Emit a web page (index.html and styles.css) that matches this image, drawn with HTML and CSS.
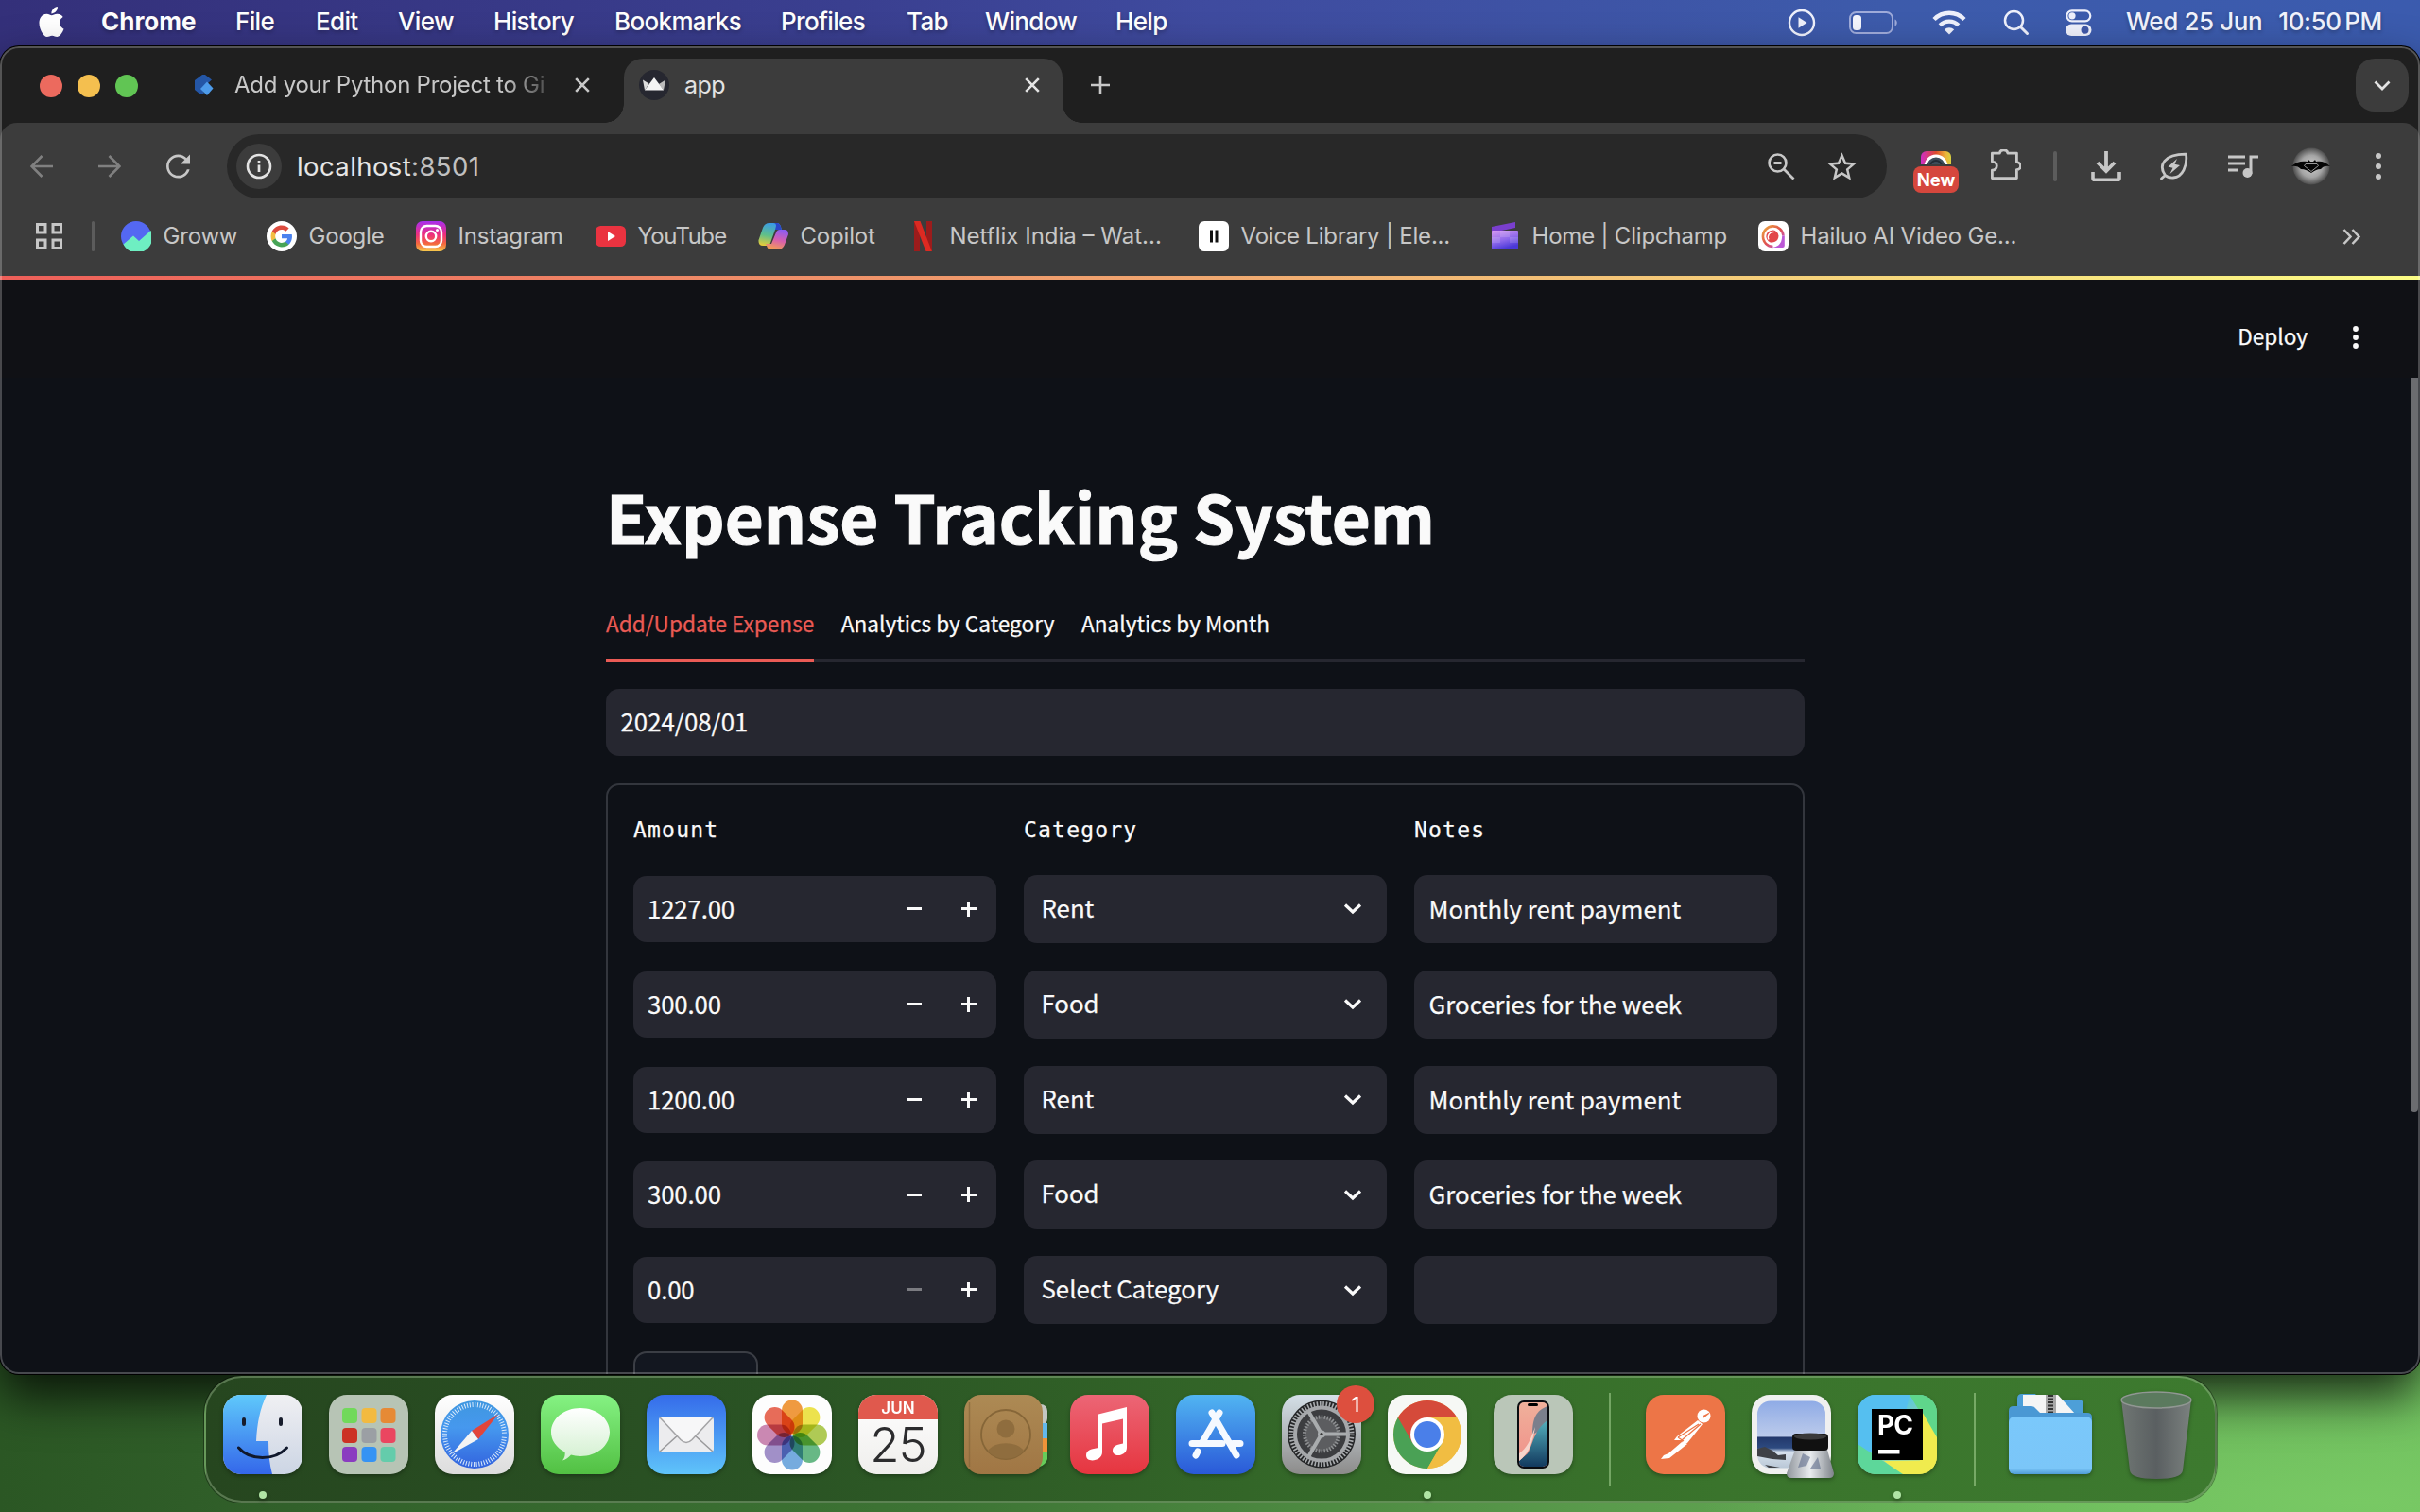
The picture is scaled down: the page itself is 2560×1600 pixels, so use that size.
FILE: index.html
```html
<!DOCTYPE html>
<html lang="en">
<head>
<meta charset="utf-8">
<title>app</title>
<link rel="stylesheet" href="styles.css">
</head>
<body>
<header class="menubar">
  <svg class="apple" viewBox="2 0 20 24"><path fill="#fff" d="M12.152 6.896c-.948 0-2.415-1.078-3.96-1.04-2.04.027-3.91 1.183-4.961 3.014-2.117 3.675-.546 9.103 1.519 12.09 1.013 1.454 2.208 3.09 3.792 3.039 1.52-.065 2.09-.987 3.935-.987 1.831 0 2.35.987 3.96.948 1.637-.026 2.676-1.48 3.676-2.948 1.156-1.688 1.636-3.325 1.662-3.415-.039-.013-3.182-1.221-3.22-4.857-.026-3.04 2.48-4.494 2.597-4.559-1.429-2.09-3.623-2.324-4.39-2.376-2-.156-3.675 1.09-4.61 1.09zM15.53 3.83c.843-1.012 1.4-2.427 1.245-3.83-1.207.052-2.662.805-3.532 1.818-.78.896-1.454 2.338-1.273 3.714 1.338.104 2.715-.688 3.559-1.701"/></svg>
  <nav class="menus">
    <span class="t menu-app">Chrome</span><span class="t">File</span><span class="t">Edit</span><span class="t">View</span><span class="t">History</span><span class="t">Bookmarks</span><span class="t">Profiles</span><span class="t">Tab</span><span class="t">Window</span><span class="t">Help</span>
  </nav>
  <div class="status">
    <svg width="30" height="30" viewBox="0 0 30 30"><circle cx="15" cy="15" r="13" fill="none" stroke="#eef0fb" stroke-width="2.4"/><path d="M11.5 9.2v11.6l9-5.8z" fill="#eef0fb"/></svg>
    <svg width="52" height="24" viewBox="0 0 52 24"><rect x="1" y="1" width="45" height="22" rx="6.5" fill="none" stroke="#9fabda" stroke-width="2"/><rect x="4" y="4" width="9" height="16" rx="3.5" fill="#f3f4fc"/><path d="M48.500 8.500c3 1 3 6 0 7z" fill="#9fabda"/></svg>
    <svg width="36" height="26" viewBox="0 0 36 26"><g fill="none" stroke="#eef0fb" stroke-width="4.400"><path d="M2 9.500a22.500 22.500 0 0 1 32 0"/><path d="M8.200 15.700a13.800 13.800 0 0 1 19.600 0"/></g><path d="M12.800 20.300a7.400 7.400 0 0 1 10.400 0L18 25.500z" fill="#eef0fb"/></svg>
    <svg width="28" height="28" viewBox="0 0 28 28"><circle cx="11.500" cy="11.500" r="9.500" fill="none" stroke="#eef0fb" stroke-width="2.500"/><path d="M18.500 18.500l7 7" stroke="#eef0fb" stroke-width="3" stroke-linecap="round"/></svg>
    <svg width="28" height="28" viewBox="0 0 28 28"><rect x="1.300" y="1.300" width="25" height="11" rx="5.500" fill="none" stroke="#eef0fb" stroke-width="2.200"/><circle cx="7" cy="6.800" r="3.600" fill="#eef0fb"/><rect y="15.500" width="27.500" height="12.500" rx="6.200" fill="#eef0fb"/><circle cx="20.500" cy="21.800" r="4" fill="#4058a8"/></svg>
  </div>
  <div class="clock"><span class="t">Wed 25 Jun</span><span class="t time">10:50 PM</span></div>
</header>

<main class="window">
  <div class="tabstrip">
    <div class="lights"><i class="red"></i><i class="yellow"></i><i class="green"></i></div>
    <div class="tab">
      <svg class="fav" width="20" height="22" viewBox="0 0 20 22"><path d="M8 0h3l7 5.500-7 6-3 4 2 4-4 1.500-6-5V6z" fill="#2456a6"/><path d="M13 7.500l6.500 7L13 22l-7-7z" fill="#4d9bea"/></svg>
      <span class="t tab-title fade">Add your Python Project to Gi</span>
      <svg width="16" height="16" viewBox="0 0 16 16"><path d="M1.200 1.200l13.600 13.600M14.800 1.200L1.200 14.800" stroke="#c7c7c7" stroke-width="2.600"/></svg>
    </div>
    <div class="tab active">
      <svg class="fav" width="32" height="32" viewBox="0 0 32 32"><circle cx="16" cy="16" r="16" fill="#262730"/><path d="M6 21.500L4 10.500l6.500 4z" fill="#ddd"/><path d="M28 10.500l-2 11-5-6.500z" fill="#bbb"/><path d="M16 8l6 8 4 5.500H6l4-5.500z" fill="#f4f4f4"/></svg>
      <span class="t tab-title">app</span>
      <svg width="16" height="16" viewBox="0 0 16 16"><path d="M1.200 1.200l13.600 13.600M14.800 1.200L1.200 14.800" stroke="#e3e3e3" stroke-width="2.600"/></svg>
    </div>
    <svg class="newtab" width="20" height="20" viewBox="0 0 20 20"><path d="M10 0v20M0 10h20" stroke="#c7c7c7" stroke-width="2.600"/></svg>
    <div class="tabsearch"><svg width="18" height="11" viewBox="0 0 18 11"><path d="M1.500 1.500L9 9l7.500-7.500" fill="none" stroke="#e3e3e3" stroke-width="2.700"/></svg></div>
  </div>

  <div class="toolbar">
    <div class="navs">
      <svg width="24" height="24" viewBox="0 0 24 24"><path d="M24 12H2M12.500 1L1.600 12l10.900 11" fill="none" stroke="#808080" stroke-width="2.600"/></svg>
      <svg width="24" height="24" viewBox="0 0 24 24"><path d="M0 12h22M11.500 1l10.900 11-10.900 11" fill="none" stroke="#808080" stroke-width="2.600"/></svg>
      <svg width="25" height="26" viewBox="4 3.800 16 16.400"><path fill="#c7c7c7" d="M17.65 6.35C16.2 4.9 14.210 4 12 4c-4.420 0-7.990 3.580-7.990 8s3.570 8 7.990 8c3.730 0 6.840-2.550 7.730-6h-1.800c-.9 2.550-3.200 4.300-5.930 4.300-3.480 0-6.300-2.820-6.300-6.300s2.820-6.300 6.300-6.300c1.740 0 3.300.71 4.430 1.850L13.600 10.400H20V4z"/></svg>
    </div>
    <div class="omnibox">
      <div class="siteinfo"><svg width="28" height="28" viewBox="0 0 28 28"><circle cx="14" cy="14" r="12" fill="none" stroke="#e3e3e3" stroke-width="2.600"/><path d="M14 12.500v7.500M14 8v2.700" stroke="#e3e3e3" stroke-width="2.700"/></svg></div>
      <span class="t url">localhost<em>:8501</em></span>
      <svg class="zoomout" width="29" height="29" viewBox="0 0 29 29"><circle cx="10.500" cy="10.500" r="9" fill="none" stroke="#c7c7c7" stroke-width="2.600"/><path d="M17 17l10.500 10.500M6.500 10.500h8" stroke="#c7c7c7" stroke-width="2.800"/></svg>
      <svg class="star" width="31" height="30" viewBox="2 2 20 19"><path fill="#c7c7c7" d="M22 9.240l-7.190-.620L12 2 9.190 8.630 2 9.240l5.460 4.730L5.820 21 12 17.270 18.180 21l-1.630-7.030L22 9.240zM12 15.400l-3.760 2.270 1-4.280-3.320-2.880 4.380-.380L12 6.100l1.710 4.040 4.380.380-3.320 2.880 1 4.280L12 15.400z"/></svg>
    </div>
    <div class="actions">
      <div class="ext"><svg width="32" height="16" viewBox="0 0 32 16"><defs><linearGradient id="ex"><stop offset="0" stop-color="#cf2fc4"/><stop offset=".5" stop-color="#dd4a2c"/><stop offset=".8" stop-color="#edb03a"/><stop offset="1" stop-color="#d8d040"/></linearGradient><clipPath id="exc"><path d="M0 14V6a6 6 0 0 1 6-6h20a6 6 0 0 1 6 6v8z"/></clipPath></defs><g clip-path="url(#exc)"><path d="M0 0h32v14H0z" fill="url(#ex)"/><circle cx="16" cy="16" r="11" fill="#3d4d5a" stroke="#fff" stroke-width="3"/><circle cx="16" cy="16" r="6" fill="none" stroke="#222c36" stroke-width="2"/></g></svg><b class="t badge-new">New</b></div>
      <svg class="puzzle" width="32" height="32" viewBox="0 0 32 32"><path d="M10 4.500c.5-4.500 8-4.500 8.500 0H28v9.500c5.500 0 5.500 8 0 8v9H2v-8.500c6.500 0 6.500-9 0-9V4.500z" transform="translate(-.6 -.4)" fill="none" stroke="#c7c7c7" stroke-width="2.800" stroke-linejoin="round"/></svg>
      <i class="sep"></i>
      <svg class="dl" width="32" height="32" viewBox="0 0 32 32"><path d="M16 0v21M7 12l9 9 9-9" fill="none" stroke="#c7c7c7" stroke-width="3.800"/><path d="M2 22v7q0 1.300 1.300 1.300h25.400q1.300 0 1.300-1.300v-7" fill="none" stroke="#c7c7c7" stroke-width="3.600"/></svg>
      <svg class="leaf" width="30" height="30" viewBox="0 0 30 30"><path d="M5.500 24.500C-2 14 4 2 27.500 2.200 29 14 24 26.500 14 27c-4 .2-6.500-.5-8.500-2.500zM1.500 28l4-3.500z" fill="none" stroke="#c7c7c7" stroke-width="2.800" stroke-linejoin="round"/><path d="M18 7L8.500 15.500l5 1.200L10.500 23l10.500-9-5.500-1.200z" fill="#c7c7c7"/></svg>
      <svg class="music" width="32" height="26" viewBox="0 0 32 26"><path d="M0 3h18M0 10h18M0 17h11M24 21V3h8" fill="none" stroke="#c7c7c7" stroke-width="3"/><circle cx="20.500" cy="20" r="5" fill="#c7c7c7"/></svg>
      <svg class="avatar" width="44" height="40" viewBox="0 0 44 40"><defs><radialGradient id="av"><stop offset="0" stop-color="#d0d0d0"/><stop offset=".6" stop-color="#a4a4a4"/><stop offset="1" stop-color="#4d4d4d"/></radialGradient></defs><circle cx="22" cy="20" r="19.500" fill="url(#av)"/><path d="M1 20c5-5 11-6 17-5l1-2 2 2h3l2-2 1 2c5-1 10 0 15 5-4-1-8 0-10 3-4 0-7 2-10 4-3-2-7-4-11-4-2-3-7-4-10-3z" fill="#050505"/><path d="M16 17.500h12l1.500 2-7.500 6-7.500-6z" fill="none" stroke="#999" stroke-width="1"/></svg>
      <svg class="more" width="6" height="30" viewBox="0 0 6 30"><g fill="#c7c7c7"><circle cx="3" cy="4" r="3"/><circle cx="3" cy="15" r="3"/><circle cx="3" cy="26" r="3"/></g></svg>
    </div>
  </div>

  <div class="bookmarks">
    <svg class="apps" width="28" height="28" viewBox="0 0 28 28"><path d="M1.500 1.500h8.500v8.500H1.500zM18 1.500h8.500v8.500H18zM1.500 18h8.500v8.500H1.500zM18 18h8.500v8.500H18z" fill="none" stroke="#c7c7c7" stroke-width="3"/></svg>
    <i class="sep"></i>
    <div class="marks">
      <a><svg viewBox="0 0 32 32"><circle cx="16" cy="16" r="16" fill="#5468f2"/><path d="M2.500 24.500L13 15.500l6 5.500L31.500 10A16 16 0 0 1 2.500 24.500z" fill="#6eefc2"/></svg><span class="t">Groww</span></a>
      <a><svg viewBox="0 0 32 32"><circle cx="16" cy="16" r="16" fill="#fff"/><g transform="translate(3.500 3.500) scale(1.040)"><path fill="#4b82ee" d="M22.56 12.250c0-.780-.070-1.530-.200-2.250H12v4.260h5.920c-.260 1.370-1.040 2.530-2.210 3.310v2.770h3.570c2.080-1.920 3.280-4.740 3.280-8.090z"/><path fill="#48a457" d="M12 23c2.970 0 5.460-.980 7.280-2.660l-3.570-2.770c-.980.660-2.230 1.060-3.710 1.060-2.860 0-5.290-1.930-6.160-4.530H2.180v2.840C3.990 20.530 7.700 23 12 23z"/><path fill="#f3bd42" d="M5.840 14.090c-.220-.660-.350-1.360-.350-2.090s.130-1.430.350-2.090V7.070H2.180C1.430 8.550 1 10.220 1 12s.430 3.450 1.180 4.930l2.850-2.220.810-.620z"/><path fill="#dc4b3e" d="M12 5.380c1.620 0 3.060.560 4.210 1.640l3.150-3.150C17.450 2.090 14.970 1 12 1 7.700 1 3.990 3.470 2.180 7.070l3.660 2.840c.870-2.600 3.300-4.530 6.160-4.530z"/></g></svg><span class="t">Google</span></a>
      <a><svg viewBox="0 0 32 32"><defs><linearGradient id="ig" x1="0" y1="0" x2="0" y2="1"><stop offset="0" stop-color="#a72ff0"/><stop offset=".45" stop-color="#ee2f7c"/><stop offset=".75" stop-color="#f3693e"/><stop offset="1" stop-color="#f7c84c"/></linearGradient></defs><rect width="32" height="32" rx="7" fill="url(#ig)"/><rect x="5" y="5" width="22" height="22" rx="6.500" fill="none" stroke="#fff" stroke-width="2.400"/><circle cx="16" cy="16" r="5.200" fill="none" stroke="#fff" stroke-width="2.400"/><circle cx="22.500" cy="9.500" r="1.500" fill="#fff"/></svg><span class="t">Instagram</span></a>
      <a><svg viewBox="0 0 32 32"><rect y="5" width="32" height="22" rx="5.500" fill="#ea3340"/><path d="M13 11v10l8-5z" fill="#fff"/></svg><span class="t tight">YouTube</span></a>
      <a><svg viewBox="0 0 32 32"><defs><linearGradient id="cp1" x1=".5" y1="0" x2=".3" y2="1"><stop offset="0" stop-color="#3a9be6"/><stop offset=".55" stop-color="#5fc08a"/><stop offset="1" stop-color="#e6cc3a"/></linearGradient><linearGradient id="cp2" x1=".6" y1="0" x2=".3" y2="1"><stop offset="0" stop-color="#8d5cf0"/><stop offset=".5" stop-color="#d75fae"/><stop offset="1" stop-color="#f4a04e"/></linearGradient></defs><path d="M12 2h8q3 0 4 4l1 3h-7l-5 14q-1 3-4 3H5q-5 0-4.500-6L5 7q2-5 7-5z" fill="url(#cp1)"/><path d="M20 2q3 0 4 4l1 3h-7l1-4q0-3-3-3z" fill="#2b46c8"/><path d="M21 30h-8q-3 0-4-4l-1-2h6l5-12q1-3 4-3h5q4 0 4 5l-4 11q-2 5-7 5z" fill="url(#cp2)"/></svg><span class="t">Copilot</span></a>
      <a><svg viewBox="0 0 32 32"><path d="M7 0h6v32l-6 .5zM20 0h6v32.500L20 32z" fill="#9c1c1c"/><path d="M7 0h6.500L26 32.500 19.500 32z" fill="#dc2a22"/></svg><span class="t wide">Netflix India – Wat...</span></a>
      <a><svg viewBox="0 0 32 32"><rect width="32" height="32" rx="6" fill="#fff"/><path d="M12 9.500h3v13h-3zM17.500 9.500h3v13h-3z" fill="#111"/></svg><span class="t">Voice Library | Ele...</span></a>
      <a><svg viewBox="0 0 32 32"><defs><linearGradient id="cc" x1="0" y1="0" x2=".4" y2="1"><stop offset="0" stop-color="#d79af0"/><stop offset=".6" stop-color="#8c67ea"/><stop offset="1" stop-color="#4a38d8"/></linearGradient></defs><path d="M2 6L27 1v6L8 11H2z" fill="#7a3fce"/><rect x="2" y="10" width="28" height="20" rx="1" fill="url(#cc)"/><path d="M11 10h10v7H11zM21 17h9v6h-9zM2 17h9v6H2z" fill="#fff" opacity=".13"/></svg><span class="t">Home | Clipchamp</span></a>
      <a><svg viewBox="0 0 32 32"><defs><linearGradient id="hl" x1="0" y1="0" x2="1" y2="1"><stop offset="0" stop-color="#ecaa3c"/><stop offset=".5" stop-color="#e0504e"/><stop offset="1" stop-color="#b95cf0"/></linearGradient></defs><rect width="32" height="32" rx="7" fill="#fff"/><path d="M26.500 15.500A10.800 10.800 0 1 0 15.500 27" fill="none" stroke="url(#hl)" stroke-width="2.600"/><path d="M27.800 15.500V26q0 2-2 2H15c7-1 10-5 10.200-12.500z" fill="#bb58d6"/><path d="M15.500 22.800a6.600 6.600 0 1 1 6-7.300c0 4-3 7.500-8 7z" fill="#e2474a"/><path d="M11 19.500c-2-4 1-8.500 5.500-8" fill="none" stroke="#fff" stroke-width="1.400"/></svg><span class="t">Hailuo AI Video Ge...</span></a>
    </div>
    <svg class="overflow" width="20" height="17" viewBox="0 0 20 17"><path d="M1.500 1l7 7.500-7 7.500M10.500 1l7 7.500-7 7.500" fill="none" stroke="#c7c7c7" stroke-width="2.500"/></svg>
  </div>

  <section class="page">
    <div class="decoration"></div>
    <div class="st-header"><span class="t deploy">Deploy</span><svg width="6" height="26" viewBox="0 0 6 26"><g fill="#fafafa"><circle cx="3" cy="4" r="2.900"/><circle cx="3" cy="13" r="2.900"/><circle cx="3" cy="22" r="2.900"/></g></svg></div>
    <div class="scrollbar"></div>
    <div class="block">
      <h1><span class="t">Expense Tracking System</span></h1>
      <div class="st-tabs"><span class="st-tab on"><span class="t">Add/Update Expense</span></span><span class="st-tab"><span class="t">Analytics by Category</span></span><span class="st-tab"><span class="t">Analytics by Month</span></span></div>
      <div class="field date"><span class="t">2024/08/01</span></div>
      <form class="form">
        <div class="label"><span class="t">Amount</span></div><div class="label"><span class="t">Category</span></div><div class="label"><span class="t">Notes</span></div>

        <div class="field amount"><span class="t">1227.00</span><i class="minus"></i><i class="plus"></i></div>
        <div class="field select"><span class="t">Rent</span><svg width="20" height="13" viewBox="0 0 20 13"><path d="M2 2.500l8 7.500 8-7.500" fill="none" stroke="#fafafa" stroke-width="3.200"/></svg></div>
        <div class="field"><span class="t">Monthly rent payment</span></div>

        <div class="field amount"><span class="t">300.00</span><i class="minus"></i><i class="plus"></i></div>
        <div class="field select"><span class="t">Food</span><svg width="20" height="13" viewBox="0 0 20 13"><path d="M2 2.500l8 7.500 8-7.500" fill="none" stroke="#fafafa" stroke-width="3.200"/></svg></div>
        <div class="field"><span class="t">Groceries for the week</span></div>

        <div class="field amount"><span class="t">1200.00</span><i class="minus"></i><i class="plus"></i></div>
        <div class="field select"><span class="t">Rent</span><svg width="20" height="13" viewBox="0 0 20 13"><path d="M2 2.500l8 7.500 8-7.500" fill="none" stroke="#fafafa" stroke-width="3.200"/></svg></div>
        <div class="field"><span class="t">Monthly rent payment</span></div>

        <div class="field amount"><span class="t">300.00</span><i class="minus"></i><i class="plus"></i></div>
        <div class="field select"><span class="t">Food</span><svg width="20" height="13" viewBox="0 0 20 13"><path d="M2 2.500l8 7.500 8-7.500" fill="none" stroke="#fafafa" stroke-width="3.200"/></svg></div>
        <div class="field"><span class="t">Groceries for the week</span></div>

        <div class="field amount"><span class="t">0.00</span><i class="minus off"></i><i class="plus"></i></div>
        <div class="field select"><span class="t">Select Category</span><svg width="20" height="13" viewBox="0 0 20 13"><path d="M2 2.500l8 7.500 8-7.500" fill="none" stroke="#fafafa" stroke-width="3.200"/></svg></div>
        <div class="field"></div>

        <div class="submit"></div>
      </form>
    </div>
  </section>
</main>

<footer class="dock">
  <div class="app running">
    <svg viewBox="0 0 84 84"><defs><linearGradient id="fa" x1="0" y1="0" x2="0" y2="1"><stop offset="0" stop-color="#5fc9fb"/><stop offset="1" stop-color="#3467ea"/></linearGradient><linearGradient id="fb" x1="0" y1="0" x2="0" y2="1"><stop offset="0" stop-color="#f0f0f3"/><stop offset="1" stop-color="#ccd5e4"/></linearGradient><clipPath id="sq"><rect width="84" height="84" rx="19"/></clipPath></defs><g clip-path="url(#sq)"><path d="M0 0h84v84H0z" fill="url(#fb)"/><path d="M0 0h46c-7 15-10 30-11 49h13c0 13 1 24 4 35H0z" fill="url(#fa)"/></g><path d="M22 26v5M61 26v5" stroke="#171c2c" stroke-width="4" stroke-linecap="round"/><path d="M16.500 56c12 14 38 14 51 0" fill="none" stroke="#10182c" stroke-width="3" stroke-linecap="round"/></svg>
  </div>
  <div class="app">
    <svg viewBox="0 0 84 84"><rect width="84" height="84" rx="19" fill="#b7c4b5"/><g><rect x="14" y="14" width="16" height="16" rx="4" fill="#71d95a"/><rect x="34.500" y="14" width="16" height="16" rx="4" fill="#f2ba40"/><rect x="54.500" y="14" width="16" height="16" rx="4" fill="#e68a35"/><rect x="14" y="35" width="16" height="16" rx="4" fill="#cc3124"/><rect x="34.500" y="35" width="16" height="16" rx="4" fill="#9b9fa4"/><rect x="54.500" y="35" width="16" height="16" rx="4" fill="#ea4660"/><rect x="14" y="55" width="16" height="16" rx="4" fill="#8a3cc0"/><rect x="34.500" y="55" width="16" height="16" rx="4" fill="#3593f4"/><rect x="54.500" y="55" width="16" height="16" rx="4" fill="#64ccab"/></g></svg>
  </div>
  <div class="app">
    <svg viewBox="0 0 84 84"><defs><linearGradient id="w" x1="0" y1="0" x2="0" y2="1"><stop offset="0" stop-color="#fff"/><stop offset="1" stop-color="#dcdcdc"/></linearGradient><linearGradient id="sf" x1="0" y1="0" x2="0" y2="1"><stop offset="0" stop-color="#3f97e0"/><stop offset=".4" stop-color="#4698ee"/><stop offset="1" stop-color="#3263de"/></linearGradient></defs><rect width="84" height="84" rx="19" fill="url(#w)"/><circle cx="42" cy="42" r="36" fill="url(#sf)"/><circle cx="42" cy="42" r="31.500" fill="none" stroke="#dcebfb" stroke-width="5" stroke-dasharray="1 1.749"/><path d="M67 20.500L46 47l-7-9z" fill="#e2453b"/><path d="M18 62.500L39 38l7 9z" fill="#f4f4f4"/></svg>
  </div>
  <div class="app">
    <svg viewBox="0 0 84 84"><defs><linearGradient id="ms" x1="0" y1="0" x2="0" y2="1"><stop offset="0" stop-color="#85f283"/><stop offset="1" stop-color="#52c043"/></linearGradient><linearGradient id="mb" x1="0" y1="0" x2="0" y2="1"><stop offset="0" stop-color="#fff"/><stop offset="1" stop-color="#d2f0cf"/></linearGradient></defs><rect width="84" height="84" rx="19" fill="url(#ms)"/><path d="M42 14c17 0 31 11 31 25.500S59 65 42 65c-4 0-7-.5-10-1.400-3 3.400-6 5.400-9 6 2.500-3 3-6 2.500-9C17 56 11 48.500 11 39.500 11 25 25 14 42 14z" fill="url(#mb)"/></svg>
  </div>
  <div class="app">
    <svg viewBox="0 0 84 84"><defs><linearGradient id="ml" x1="0" y1="0" x2="0" y2="1"><stop offset="0" stop-color="#356bea"/><stop offset="1" stop-color="#5fc4fa"/></linearGradient></defs><rect width="84" height="84" rx="19" fill="url(#ml)"/><rect x="13" y="23" width="58" height="38" rx="4" fill="#ececee"/><path d="M14 60l20-18M70 60L50 42" stroke="#9a9a9c" stroke-width="1.500"/><path d="M14 24l22 23.500c4 4 8 4 12 0L70 24" fill="#f7f7f8" stroke="#a4a4a6" stroke-width="1.500"/></svg>
  </div>
  <div class="app">
    <svg viewBox="0 0 84 84"><rect width="84" height="84" rx="19" fill="#fdfdfd"/><g class="petals"><rect x="31" y="5.500" width="22" height="36" rx="11" fill="#f0932f"/><rect x="31" y="5.500" width="22" height="36" rx="11" fill="#ede23e" transform="rotate(45 42 42.500)"/><rect x="31" y="5.500" width="22" height="36" rx="11" fill="#aac846" transform="rotate(90 42 42.500)"/><rect x="31" y="5.500" width="22" height="36" rx="11" fill="#5bb47c" transform="rotate(135 42 42.500)"/><rect x="31" y="5.500" width="22" height="36" rx="11" fill="#6ba6de" transform="rotate(180 42 42.500)"/><rect x="31" y="5.500" width="22" height="36" rx="11" fill="#9a88c6" transform="rotate(225 42 42.500)"/><rect x="31" y="5.500" width="22" height="36" rx="11" fill="#c87fae" transform="rotate(270 42 42.500)"/><rect x="31" y="5.500" width="22" height="36" rx="11" fill="#e8604c" transform="rotate(315 42 42.500)"/></g></svg>
  </div>
  <div class="app calendar"><b class="t">JUN</b><span class="t">25</span></div>
  <div class="app">
    <svg viewBox="0 0 84 84"><defs><linearGradient id="ct" x1="0" y1="0" x2="0" y2="1"><stop offset="0" stop-color="#ad8a54"/><stop offset="1" stop-color="#a07644"/></linearGradient></defs><rect x="66" y="10" width="22" height="22" rx="7" fill="#c4c6c2"/><path d="M76 30h12v16H76z" fill="#62b8ec"/><path d="M76 46h12v14H76z" fill="#ee9339"/><path d="M76 60h12v8q-2 6-8 8z" fill="#66cc5a"/><rect width="83" height="84" rx="18" fill="url(#ct)"/><path d="M5.500 8v68" stroke="#86673a" stroke-width="1.500" opacity=".7"/><circle cx="44" cy="42" r="26" fill="none" stroke="#866638" stroke-width="1.800"/><circle cx="44" cy="36" r="9.500" fill="#8f6d3e"/><path d="M25 59.500c6-11 32-11 38 0-9 11-29 11-38 0z" fill="#8f6d3e"/></svg>
  </div>
  <div class="app">
    <svg viewBox="0 0 84 84"><defs><linearGradient id="mu" x1="0" y1="0" x2="0" y2="1"><stop offset="0" stop-color="#ec6676"/><stop offset="1" stop-color="#e6353f"/></linearGradient></defs><rect width="84" height="84" rx="19" fill="url(#mu)"/><path d="M30 20.500L60 13v43c0 9-15 11-15 3 0-5 5-6.500 11-7.500V25.500l-22 5V61c0 9-17 12-17 3 0-6 6-6.500 13-8z" fill="#fff"/></svg>
  </div>
  <div class="app">
    <svg viewBox="0 0 84 84"><defs><linearGradient id="as" x1="0" y1="0" x2="0" y2="1"><stop offset="0" stop-color="#51b5f2"/><stop offset="1" stop-color="#2a59d8"/></linearGradient></defs><rect width="84" height="84" rx="19" fill="url(#as)"/><g stroke="#f5f9ff" stroke-width="7" stroke-linecap="round"><path d="M17 51.500h32M60 51.500h8M46 19L28 50M38 19l26 45M23 60l-2 4"/></g></svg>
  </div>
  <div class="app">
    <svg viewBox="0 0 84 84"><defs><linearGradient id="st" x1="0" y1="0" x2="0" y2="1"><stop offset="0" stop-color="#d5e0e8"/><stop offset="1" stop-color="#8c8b8a"/></linearGradient></defs><rect width="84" height="84" rx="19" fill="url(#st)"/><circle cx="42" cy="41.500" r="36" fill="#242527"/><circle cx="42" cy="41.500" r="32" fill="none" stroke="#a8abae" stroke-width="5" stroke-dasharray="1.600 1.700"/><circle cx="42" cy="41.500" r="28" fill="#3c3d40" stroke="#a5a7aa" stroke-width="4"/><circle cx="42" cy="41.500" r="18" fill="#5c5d60" stroke="#8e9092" stroke-width="4" stroke-dasharray="1.500 1.500"/><path d="M42 41.500h27M42 41.500L28.500 18M42 41.500L28.500 65" stroke="#a9acae" stroke-width="4"/><circle cx="42" cy="41.500" r="4" fill="#a9acae"/><circle cx="42" cy="41.500" r="1.600" fill="#333"/></svg>
    <b class="t count">1</b>
  </div>
  <div class="app running">
    <svg viewBox="0 0 84 84"><rect width="84" height="84" rx="19" fill="#f6f8f5"/><circle cx="42" cy="42" r="36" fill="#f1bd42"/><path d="M42 42L10.800 24A36 36 0 0 0 42 78l15.600-27z" fill="#4aa155"/><path d="M42 42L57.600 51 42 78a36 36 0 0 0 31.200-54H42z" fill="#f1bd42"/><path d="M26.400 51L10.800 24a36 36 0 0 1 62.400 0H42z" fill="#d54a3a"/><circle cx="42" cy="42" r="18" fill="#fff"/><circle cx="42" cy="42" r="14" fill="#4a7fe9"/></svg>
  </div>
  <div class="app">
    <svg viewBox="0 0 84 84"><defs><linearGradient id="ip" x1="0" y1="0" x2="0" y2="1"><stop offset="0" stop-color="#f0b09b"/><stop offset="1" stop-color="#ef8f88"/></linearGradient><linearGradient id="iq" x1="0" y1="0" x2="0" y2="1"><stop offset="0" stop-color="#54b0bd"/><stop offset="1" stop-color="#12395e"/></linearGradient><clipPath id="ph"><rect x="27" y="8" width="30" height="68" rx="5"/></clipPath></defs><rect width="84" height="84" rx="19" fill="#bac6b8"/><rect x="25" y="6" width="34" height="72" rx="7" fill="#0a0c10"/><g clip-path="url(#ph)"><path d="M27 8h30v68H27z" fill="url(#ip)"/><path d="M57 12c-12 5-16 12-16 30l16-8z" fill="#7b7f8c"/><path d="M57 27C42 38 42 52 36 62l-9 8v6h30z" fill="url(#iq)"/><path d="M44 34c-3 18-7 28-17 36v-8c10-7 12-16 17-28z" fill="#f5d4cb"/></g><rect x="36" y="9" width="11" height="3" rx="1.500"/></svg>
  </div>
  <i class="rule"></i>
  <div class="app">
    <svg viewBox="0 0 84 84"><rect width="84" height="84" rx="19" fill="#ed7547"/><g fill="#fff"><circle cx="61.500" cy="22.500" r="7"/><path d="M55 27l5 4L44 51l-6 3 1-6-9 0 3-4z"/><path d="M38 50l6 2-19 15-9 1 3-4 5-2z"/></g><path d="M61 24l5-4M34 45l22-14M38 48l20-17M61 22.500l6-3M40 49l-6-4" stroke="#ed7547" stroke-width="1.300"/></svg>
  </div>
  <div class="app">
    <svg viewBox="0 0 84 84"><defs><linearGradient id="pv" x1="0" y1="0" x2="0" y2="1"><stop offset="0" stop-color="#8fabe6"/><stop offset=".53" stop-color="#bccbeb"/><stop offset=".54" stop-color="#23386b"/><stop offset=".7" stop-color="#2d4a80"/><stop offset=".76" stop-color="#d8e2ee"/><stop offset="1" stop-color="#b9c7d6"/></linearGradient><linearGradient id="pg" x1="0" y1="0" x2="1" y2="0"><stop offset="0" stop-color="#8f949b"/><stop offset=".5" stop-color="#e9ecef"/><stop offset="1" stop-color="#7e838a"/></linearGradient></defs><rect width="84" height="84" rx="19" fill="#f0f0f0"/><rect x="6" y="6.500" width="72" height="71" rx="14" fill="url(#pv)"/><path d="M6 57l8-2 8 4 6 5 8-1v6l-14-1-16-3zM14 74l16 3h-12z" fill="#3f4147"/><path d="M46 58h34l7 25q0 5-5 5H42q-5 0-5-5z" fill="url(#pg)"/><path d="M54 62l8 4-4 9-9 2zM62 78l8-12 3 12z" fill="#5d6b8a" opacity=".6"/><rect x="43" y="41" width="38" height="18" rx="4" fill="#111"/><ellipse cx="62" cy="44" rx="17" ry="3.500" fill="#3a3a3a"/></svg>
  </div>
  <div class="app running pycharm">
    <svg viewBox="0 0 84 84"><defs><linearGradient id="py" x1="0" y1="0" x2="1" y2="1"><stop offset="0" stop-color="#43b4f2"/><stop offset=".3" stop-color="#4fc4ea"/><stop offset="1" stop-color="#f1ec4c"/></linearGradient></defs><g clip-path="url(#sq)"><path d="M0 0h84v84H0z" fill="url(#py)"/><path d="M0 0h55L42 60H0z" fill="#55bff0"/><path d="M55 0h29v48L66 18z" fill="#5fd68b"/><path d="M84 45L66 14v56H28l18 14h38z" fill="#f0eb4e"/><path d="M0 52l24 16 24 16H0z" fill="#5dd79a"/></g><path d="M15 15h54v54H15z"/><path d="M22 58h22.500v4.500H22z" fill="#fff"/></svg>
    <b class="t">PC</b>
  </div>
  <i class="rule"></i>
  <div class="app folder">
    <svg viewBox="0 0 88 84"><defs><linearGradient id="fo" x1="0" y1="0" x2="0" y2="1"><stop offset="0" stop-color="#7ac8fb"/><stop offset=".9" stop-color="#7bc6f8"/><stop offset="1" stop-color="#4f9cd6"/></linearGradient></defs><path d="M9 4q0-5 5-5h14l5 6h40q6 0 6 5v16H9z" fill="#4d9fd8"/><path d="M15 0h37l18 20H15z" fill="#f5f5f5"/><path d="M39 0h11v22H39z" fill="#a8a8a8"/><path d="M44.500 0v20" stroke="#333" stroke-width="5" stroke-dasharray="2 1.500"/><path d="M0 17q0-5 5-5h19q3 0 5 3l4 4h50q5 0 5 5v15H0z" fill="#4a98d4"/><rect y="23" width="88" height="61" rx="6" fill="url(#fo)"/></svg>
  </div>
  <div class="app trash">
    <svg viewBox="0 0 76 94"><defs><linearGradient id="tr" x1="0" y1="0" x2="1" y2="0"><stop offset="0" stop-color="#6f7673"/><stop offset=".5" stop-color="#5a5f61"/><stop offset="1" stop-color="#7b817f"/></linearGradient></defs><path d="M1 9l9 75q1 9 28 9t28-9l9-75z" fill="url(#tr)"/><ellipse cx="38" cy="9.500" rx="37" ry="8.500" fill="#5b7a5e" stroke="#919793" stroke-width="1.500"/></svg>
  </div>
</footer>
</body>
</html>
```
FILE: styles.css
```css
* { box-sizing: border-box; }
html, body { margin: 0; height: 1600px; overflow: hidden; }
svg { display: block; flex: none; }
i, em { font-style: normal; }
body {
  width: 2560px;
  display: flex;
  flex-direction: column;
  font-family: Inter, "Noto Sans", sans-serif;
  background:
    radial-gradient(ellipse 700px 140px at 2500px 1590px, #78c964 0, rgba(120, 201, 100, 0) 100%),
    linear-gradient(90deg, #2b5724 0, #31602a 300px, #3d7434 1000px, #5a9b4c 1700px, #6fbf5e 2560px) 0 1300px / 2560px 300px no-repeat,
    linear-gradient(90deg, #34307a 0, #3a3f90 900px, #3f4b9f 1280px, #3d5bab 2000px, #3b5bae 2560px);
}
.t { white-space: nowrap; }

/* menu bar */
.menubar {
  height: 48px; flex: none;
  display: flex; align-items: center;
  color: #fff; font-size: 26px; font-weight: 500; letter-spacing: -0.65px;
  text-shadow: 0 2px 4px rgba(0, 0, 0, .3);
}
.apple { width: 27px; height: 32px; margin-left: 41px; margin-top: -3px; }
.menus {
  width: 1783px; margin-left: 39px; margin-top: -3px;
  display: grid; grid-template-columns: 142px 85px 87px 101px 128px 176px 133px 83px 138px 1fr;
}
.menu-app { font-weight: 700; letter-spacing: 0; }
.status { display: flex; align-items: center; margin-left: 1px; margin-top: -1px; }
.status svg + svg { margin-left: 35px; }
.status svg:nth-child(3) { margin-left: 36px; }
.status svg:nth-child(4) { margin-left: 39px; }
.status svg:nth-child(5) { margin-left: 38px; }
.clock { display: flex; gap: 17px; margin-left: 36px; margin-top: -3px; color: #f1f3fc; letter-spacing: -0.4px; }
.time { word-spacing: -3px; }

/* browser window */
.window {
  position: relative; height: 1405px; flex: none; margin-top: 1px;
  display: flex; flex-direction: column;
  border-radius: 20px; overflow: hidden;
  background: #1f1f1f; color: #c7c7c7;
  box-shadow: 0 0 0 1px #000, 0 24px 50px rgba(0, 0, 0, .75);
}
.window::after {
  content: ""; position: absolute; inset: 0; border-radius: 20px;
  border: 2px solid rgba(255, 255, 255, .24); pointer-events: none;
}
.tabstrip { height: 81px; flex: none; display: flex; font-size: 25px; letter-spacing: -0.5px; }
.lights { display: flex; gap: 16px; padding: 30px 0 0 42px; }
.lights i { width: 24px; height: 24px; border-radius: 50%; }
.red { background: #ec6a5e; }
.yellow { background: #f4bf4f; }
.green { background: #61c554; }
.tab { display: flex; align-items: center; height: 68px; margin-top: 13px; padding-bottom: 12px; width: 464px; padding-left: 10px; }
.lights + .tab { width: 514px; padding-left: 60px; }
.tab .fav { margin-right: 22px; }
.tab-title { flex: 1; margin-top: -1px; }
.fade { flex: 0 0 341px; margin-right: 19px; -webkit-mask-image: linear-gradient(90deg, #000 285px, rgba(0, 0, 0, .15) 338px); mask-image: linear-gradient(90deg, #000 285px, rgba(0, 0, 0, .15) 338px); font-size: 24px; letter-spacing: -0.25px; }
.tab.active { position: relative; background: #3c3c3c; border-radius: 20px 20px 0 0; color: #e3e3e3; padding-left: 16px; padding-right: 24px; }
.tab.active .fav { margin-right: 16px; }
.tab.active::before, .tab.active::after { content: ""; position: absolute; bottom: 0; width: 20px; height: 20px; }
.tab.active::before { left: -20px; background: radial-gradient(circle at 0 0, transparent 19.5px, #3c3c3c 20px); }
.tab.active::after { right: -20px; background: radial-gradient(circle at 100% 0, transparent 19.5px, #3c3c3c 20px); }
.newtab { margin: 31px 0 0 30px; }
.tabsearch { width: 56px; height: 56px; margin: 13px 12px 0 auto; border-radius: 20px; background: #3c3c3c; display: flex; align-items: center; justify-content: center; }

.toolbar { height: 92px; flex: none; background: #3c3c3c; border-radius: 18px 18px 0 0; display: flex; align-items: center; }
.navs { display: flex; align-items: center; width: 240px; padding-left: 32px; gap: 48px; }
.omnibox { width: 1756px; height: 68px; border-radius: 34px; background: #282828; display: flex; align-items: center; padding: 0 32px 0 10px; }
.siteinfo { width: 48px; height: 48px; border-radius: 50%; background: #3c3c3c; display: flex; align-items: center; justify-content: center; }
.url { flex: 1; margin-left: 16px; font-size: 27.500px; letter-spacing: .4px; color: #e6e6e6; }
.url em { color: #c0c0c0; }
.star { margin-left: 34px; }
.actions { display: flex; align-items: center; }
.ext { margin-left: 28px; display: flex; flex-direction: column; align-items: center; padding-top: 12px; }
.badge-new { width: 48px; height: 28px; border-radius: 8px; background: #d5473d; color: #fff; font: 700 18.500px/28px Inter, sans-serif; text-align: center; }
.puzzle { margin-left: 34px; margin-top: -4px; }
.actions .sep { margin-left: 34px; }
.sep { width: 4px; height: 32px; border-radius: 2px; background: #5c5c5c; }
.dl { margin-left: 36px; }
.leaf { margin-left: 41px; }
.music { margin-left: 42px; }
.avatar { margin-left: 34px; }
.more { margin-left: 46px; }

.bookmarks { height: 70px; flex: none; background: #3c3c3c; display: flex; align-items: center; padding-bottom: 14px; font-size: 24px; letter-spacing: -0.2px; }
.apps { margin-left: 38px; }
.bookmarks .sep { margin-left: 31px; width: 3px; }
.marks { width: 2378px; margin-left: 28px; display: grid; grid-template-columns: 154px 158px 190px 172px 158px 308px 308px 284px 1fr; }
.marks a { display: flex; align-items: center; gap: 12.500px; }
.marks .t { margin-top: -2px; }
.marks .tight { letter-spacing: -0.6px; }
.marks .wide { letter-spacing: 0; }
.marks svg { width: 32px; height: 32px; }
.overflow { margin-right: 62px; margin-left: -28px; }

/* page */
.page { position: relative; flex: 1; background: #0e1117; color: #fafafa; font-family: "Noto Sans CJK SC", "Source Sans Pro", sans-serif; overflow: hidden; -webkit-text-stroke: .25px currentColor; }
.decoration { position: absolute; left: 0; right: 0; top: 0; height: 4px; background: linear-gradient(90deg, #ee5f59 0, #f0a870 50%, #fcfd85 100%); }
.st-header { height: 108px; background: #101115; display: flex; align-items: center; justify-content: flex-end; padding: 22px 65px 0 0; font-size: 22.600px; }
.deploy { margin-right: 48px; margin-top: -4px; }
.scrollbar { position: absolute; right: 2px; top: 108px; width: 8px; height: 777px; background: #6b6c70; border-radius: 0 0 4px 4px; }
.block { width: 1268px; margin-left: 641px; padding-top: 102px; }
h1 { margin: 0; font-size: 70.800px; line-height: 86px; font-weight: 700; -webkit-text-stroke: 1.100px currentColor; }
.st-tabs { margin-top: 52px; display: flex; gap: 28.600px; border-bottom: 3px solid #262730; font-size: 22.600px; line-height: 40px; }
.st-tab { padding-bottom: 17px; margin-bottom: -3px; border-bottom: 3px solid transparent; }
.st-tab.on { color: #ea5b55; border-color: #ea5b55; }
.field { height: 72px; border-radius: 14px; background: #262730; display: flex; align-items: center; padding: 0 15.500px; font-size: 25.800px; line-height: 40px; }
.field .t { margin-bottom: 2px; }
.date { margin-top: 29px; height: 71px; }
.date .t { margin-bottom: 3px; }
.form {
  margin: 29px 0 0; height: 700px; padding: 27px; border: 2px solid #33363d; border-radius: 14px;
  display: grid; grid-template-columns: 1fr 1fr 1fr; column-gap: 29px; row-gap: 28.800px; grid-auto-rows: 72px; grid-template-rows: 39.200px; align-items: center;
}
.label { font: 23px/40px "DejaVu Sans Mono", monospace; letter-spacing: 1.200px; }
.amount { height: 70px; padding: 0 21px 0 15px; }
.amount .t { flex: 1; letter-spacing: -0.150px; }
.minus, .plus { width: 16px; height: 16px; background: linear-gradient(#fafafa, #fafafa) center / 16px 3.400px no-repeat; }
.plus { margin-left: 42px; background: linear-gradient(#fafafa, #fafafa) center / 16px 3.400px no-repeat, linear-gradient(#fafafa, #fafafa) center / 3.400px 16px no-repeat; }
.off { opacity: .4; }
.select { padding: 0 26px 0 18.500px; justify-content: space-between; }
.select .t { margin-bottom: 4px; }
.submit { width: 132px; height: 72px; border: 2px solid #3b3e45; border-radius: 14px; background: #131720; }

/* dock */
.dock {
  width: 2129px; height: 134px; margin: 2px 0 0 216px; flex: none; position: relative;
  display: flex; align-items: flex-start; padding: 18px 0 0 18px; gap: 28px;
  border: 2px solid rgba(190, 220, 180, .33); border-radius: 40px;
  background: linear-gradient(90deg, #26461f 0, #2a5324 600px, #336628 1100px, #3a742c 1600px, #3d7a2f 2129px);
  box-shadow: 0 0 0 1px rgba(0, 0, 0, .35);
}
.app { position: relative; width: 84px; height: 84px; flex: none; filter: drop-shadow(0 2px 2px rgba(0, 0, 0, .3)); }
.app > svg { width: 84px; height: 84px; overflow: visible; }
.petals rect { mix-blend-mode: multiply; opacity: .92; }
.running::after { content: ""; position: absolute; left: 38px; top: 102px; width: 8px; height: 8px; border-radius: 50%; background: #b0e5a5; }
.calendar { border-radius: 19px; overflow: hidden; background: linear-gradient(#fff, #efeeec); display: flex; flex-direction: column; text-align: center; color: #2c2c2e; }
.calendar b { height: 26px; background: #e0594d; color: #fff; font: 600 17px/28px Inter, sans-serif; }
.calendar span { font: 300 51px/54px Inter, sans-serif; letter-spacing: -1px; }
.count { position: absolute; left: 58px; top: -10px; width: 40px; height: 40px; border-radius: 50%; background: #dd4f3e; color: #fff; font: 400 22px/40px Inter, sans-serif; text-align: center; }
.rule { width: 2px; height: 98px; margin-top: -2px; background: rgba(190, 230, 170, .45); }
.rule + .app { margin-left: 9px; }
.app + .rule { margin-left: 10px; }
.rule ~ .app + .rule { margin-left: 11px; }
.rule + .folder { margin-left: 7px; }
.pycharm b { position: absolute; left: 21px; top: 18px; color: #fff; font: 700 28px/28px Inter, sans-serif; letter-spacing: -1px; }
.folder, .folder > svg { width: 88px; }
.trash { width: 76px; height: 94px; margin-top: -4px; margin-left: 2px; }
.trash > svg { width: 76px; height: 94px; }
```
